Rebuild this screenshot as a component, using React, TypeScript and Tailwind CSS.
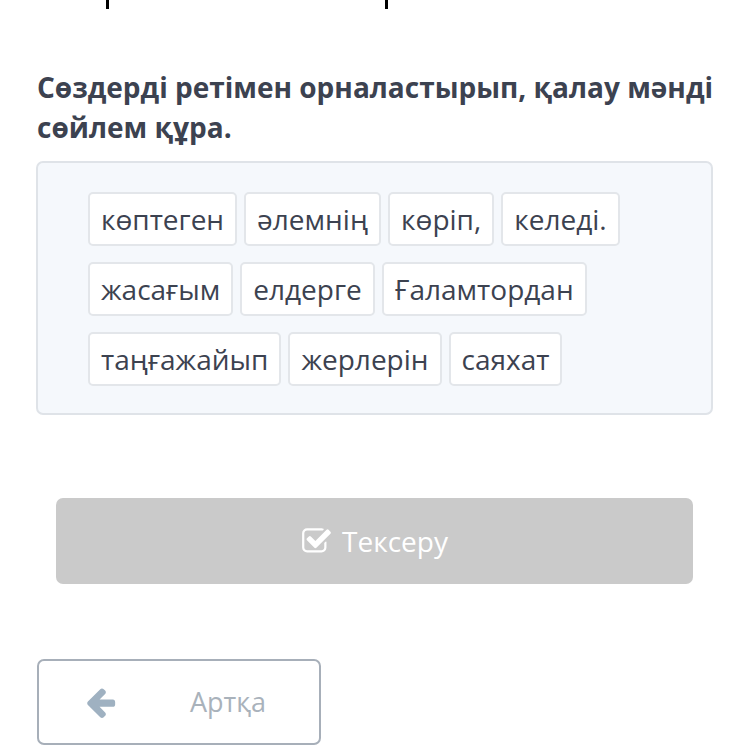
import React from "react";

const rows = [
  ["көптеген", "әлемнің", "көріп,", "келеді."],
  ["жасағым", "елдерге", "Ғаламтордан"],
  ["таңғажайып", "жерлерін", "саяхат"],
];

function CheckSquare() {
  return (
    <svg viewBox="0 0 1792 1792" className="w-[31px] h-[31px]" fill="currentColor">
      <path d="M1472 930v318q0 119-84.5 203.5t-203.5 84.5h-832q-119 0-203.5-84.5t-84.5-203.5v-832q0-119 84.5-203.5t203.5-84.5h832q63 0 117 25 15 7 18 23 3 17-9 29l-49 49q-10 10-23 10-3 0-9-2-23-6-45-6h-832q-66 0-113 47t-47 113v832q0 66 47 113t113 47h832q66 0 113-47t47-113v-254q0-13 9-22l64-64q10-10 23-10 6 0 12 3 20 8 20 29zm231-489l-814 814q-24 24-57 24t-57-24l-430-430q-24-24-24-57t24-57l110-110q24-24 57-24t57 24l263 263 647-647q24-24 57-24t57 24l110 110q24 24 24 57t-24 57z" />
    </svg>
  );
}

function ArrowLeft() {
  return (
    <svg viewBox="0 0 1792 1792" className="w-[34px] h-[34px]" fill="currentColor">
      <path d="M1536 896v128q0 53-32.5 90.5t-84.5 37.5h-704l293 294q38 36 38 90t-38 90l-75 76q-37 37-90 37-52 0-91-37l-651-652q-37-37-37-90 0-52 37-91l651-650q38-38 91-38 52 0 90 38l75 74q38 38 38 91t-38 91l-293 293h704q52 0 84.5 37.5t32.5 90.5z" />
    </svg>
  );
}

export default function App() {
  return (
    <div
      className="w-[750px] h-[750px] bg-white overflow-hidden"
      style={{ fontFamily: '"Open Sans", "Noto Sans", sans-serif' }}
    >
      <div className="flex h-[10px]">
        <div className="ml-[106px] w-[3px] h-[9px] bg-black" />
        <div className="ml-[276px] w-[3px] h-[9px] bg-black" />
      </div>
      <div className="px-[36px]">
        <h1 className="mt-[57px] text-[28px] leading-[40px] font-bold text-[#3c4250] pl-[1px] whitespace-nowrap">
          Сөздерді ретімен орналастырып, қалау мәнді
          <br />
          сөйлем құра.
        </h1>
        <div className="mt-[14px] w-[677px] h-[254px] bg-[#f5f8fc] border-2 border-[#dfe3e8] rounded-[7px] pl-[50px] pt-[29px] flex flex-col gap-[16px]">
          {rows.map((r, i) => (
            <div key={i} className="flex gap-[7px]">
              {r.map((w) => (
                <div
                  key={w}
                  className="h-[54px] px-[11px] flex items-center bg-white border-2 border-[#e3e6ea] rounded-[5px] text-[28px] text-[#3c4250]"
                >
                  {w}
                </div>
              ))}
            </div>
          ))}
        </div>
        <div className="mt-[83px] ml-[20px] w-[637px] h-[86px] bg-[#cacaca] rounded-[7px] flex items-center justify-center gap-[10px] text-white">
          <CheckSquare />
          <span className="text-[28px]">Тексеру</span>
        </div>
        <div className="mt-[75px] ml-[1px] w-[284px] h-[86px] border-2 border-[#a7afb9] rounded-[7px] flex items-center">
          <span className="ml-[47px] text-[#9fb1c1] flex">
            <ArrowLeft />
          </span>
          <span className="ml-[70px] text-[27px] text-[#a9b2bb]">Артқа</span>
        </div>
      </div>
    </div>
  );
}
